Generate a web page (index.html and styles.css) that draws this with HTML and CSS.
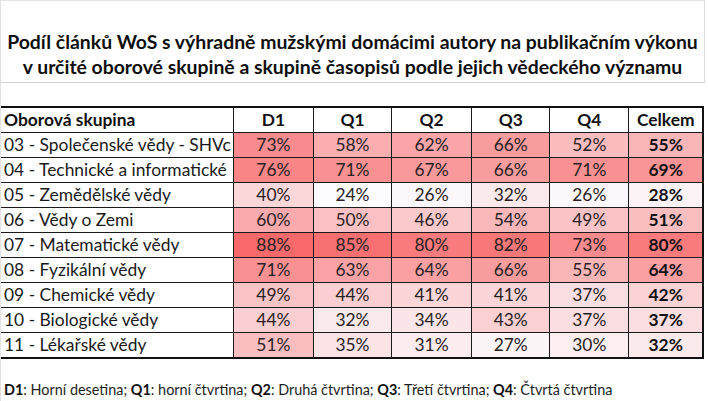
FILE: index.html
```html
<!DOCTYPE html>
<html lang="cs">
<head>
<meta charset="utf-8">
<title>Podíl článků WoS</title>
<link rel="stylesheet" href="styles.css">
</head>
<body>
<div class="page">
  <div class="title">
    <div class="title-line">Podíl článků WoS s výhradně mužskými domácimi autory na publikačním výkonu</div>
    <div class="title-line">v určité oborové skupině a skupině časopisů podle jejich vědeckého významu</div>
  </div>

  <table class="grid">
    <colgroup>
      <col class="c-name"><col class="c-d1"><col class="c-q1"><col class="c-q2"><col class="c-q3"><col class="c-q4"><col class="c-tot">
    </colgroup>
    <thead>
      <tr>
        <th class="name">Oborová skupina</th><th>D1</th><th>Q1</th><th>Q2</th><th>Q3</th><th>Q4</th><th class="tot">Celkem</th>
      </tr>
    </thead>
    <tbody>
      <tr><td class="name">03 - Společenské vědy - SHVc</td>
        <td style="background:rgb(249,139,142)">73%</td><td style="background:rgb(250,174,176)">58%</td><td style="background:rgb(250,165,167)">62%</td><td style="background:rgb(249,156,158)">66%</td><td style="background:rgb(250,188,190)">52%</td><td class="tot" style="background:rgb(250,181,183)">55%</td></tr>
      <tr><td class="name">04 - Technické a informatické</td>
        <td style="background:rgb(249,133,135)">76%</td><td style="background:rgb(249,144,146)">71%</td><td style="background:rgb(249,153,156)">67%</td><td style="background:rgb(249,156,158)">66%</td><td style="background:rgb(249,144,146)">71%</td><td class="tot" style="background:rgb(249,149,151)">69%</td></tr>
      <tr><td class="name">05 - Zemědělské vědy</td>
        <td style="background:rgb(251,215,218)">40%</td><td style="background:rgb(252,252,255)">24%</td><td style="background:rgb(252,247,250)">26%</td><td style="background:rgb(251,234,236)">32%</td><td style="background:rgb(252,247,250)">26%</td><td class="tot" style="background:rgb(252,243,246)">28%</td></tr>
      <tr><td class="name">06 - Vědy o Zemi</td>
        <td style="background:rgb(250,169,172)">60%</td><td style="background:rgb(250,192,195)">50%</td><td style="background:rgb(251,201,204)">46%</td><td style="background:rgb(250,183,186)">54%</td><td style="background:rgb(250,195,197)">49%</td><td class="tot" style="background:rgb(250,190,193)">51%</td></tr>
      <tr><td class="name">07 - Matematické vědy</td>
        <td style="background:rgb(248,105,107)">88%</td><td style="background:rgb(248,112,114)">85%</td><td style="background:rgb(249,123,126)">80%</td><td style="background:rgb(248,119,121)">82%</td><td style="background:rgb(249,139,142)">73%</td><td class="tot" style="background:rgb(249,123,126)">80%</td></tr>
      <tr><td class="name">08 - Fyzikální vědy</td>
        <td style="background:rgb(249,144,146)">71%</td><td style="background:rgb(250,162,165)">63%</td><td style="background:rgb(250,160,163)">64%</td><td style="background:rgb(249,156,158)">66%</td><td style="background:rgb(250,181,183)">55%</td><td class="tot" style="background:rgb(250,160,163)">64%</td></tr>
      <tr><td class="name">09 - Chemické vědy</td>
        <td style="background:rgb(250,195,197)">49%</td><td style="background:rgb(251,206,209)">44%</td><td style="background:rgb(251,213,216)">41%</td><td style="background:rgb(251,213,216)">41%</td><td style="background:rgb(251,222,225)">37%</td><td class="tot" style="background:rgb(251,211,213)">42%</td></tr>
      <tr><td class="name">10 - Biologické vědy</td>
        <td style="background:rgb(251,206,209)">44%</td><td style="background:rgb(251,234,236)">32%</td><td style="background:rgb(251,229,232)">34%</td><td style="background:rgb(251,208,211)">43%</td><td style="background:rgb(251,222,225)">37%</td><td class="tot" style="background:rgb(251,222,225)">37%</td></tr>
      <tr><td class="name">11 - Lékařské vědy</td>
        <td style="background:rgb(250,190,193)">51%</td><td style="background:rgb(251,227,230)">35%</td><td style="background:rgb(252,236,239)">31%</td><td style="background:rgb(252,245,248)">27%</td><td style="background:rgb(252,238,241)">30%</td><td class="tot" style="background:rgb(251,234,236)">32%</td></tr>
    </tbody>
  </table>

  <p class="note"><b>D1</b>: Horní desetina; <b>Q1</b>: horní čtvrtina; <b>Q2</b>: Druhá čtvrtina; <b>Q3</b>: Třetí čtvrtina; <b>Q4</b>: Čtvrtá čtvrtina</p>
</div>
</body>
</html>
```

FILE: styles.css
```css
html, body {
  margin: 0;
  padding: 0;
  background: #ffffff;
}

body {
  font-family: Lato, "Open Sans", "Liberation Sans", sans-serif;
  color: #1e1e1e;
}

.page {
  width: 708px;
  height: 401px;
  border-left: 1px solid #e2e2e2;
  box-sizing: border-box;
  overflow: hidden;
}

.title {
  width: 704px;
  height: 83px;
  box-sizing: border-box;
  border-top: 1px solid #e4e4e4;
  border-right: 1px solid #dcdcdc;
  border-bottom: 1px solid #d4d4d4;
  padding-top: 28px;
  text-align: center;
  font-weight: 700;
  font-size: 19.4px;
  line-height: 25px;
  color: #0f0f0f;
}

.title-line {
  white-space: nowrap;
}

.grid {
  margin-top: 23px;
  width: 703px;
  border-collapse: collapse;
  table-layout: fixed;
  font-size: 17.4px;
  border-top: 2px solid #111;
  border-bottom: 2px solid #111;
  border-right: 2px solid #111;
}

.c-name { width: 232px; }
.c-d1 { width: 80px; }
.c-q1 { width: 78px; }
.c-q2 { width: 80px; }
.c-q3 { width: 78px; }
.c-q4 { width: 79px; }
.c-tot { width: 74px; }

.grid th,
.grid td {
  height: 24px;
  padding: 0;
  text-align: center;
  border-top: 1px solid #1a1a1a;
  border-left: 1px solid #1a1a1a;
  line-height: 24px;
  white-space: nowrap;
  overflow: hidden;
}

.grid th {
  font-weight: 700;
  color: #111;
  background: #fff;
}

.grid .name {
  text-align: left;
  padding-left: 3px;
  border-left: none;
  background: #fff;
}

.grid td.tot {
  font-weight: 700;
  color: #111;
}

.grid td {
  color: #2a2222;
}

.grid td.name {
  color: #1a1a1a;
}

.note {
  margin: 22px 0 0 3px;
  font-size: 14.4px;
  line-height: 18px;
  color: #1e1e1e;
  white-space: nowrap;
}

.note b {
  font-weight: 700;
  color: #111;
}
```
